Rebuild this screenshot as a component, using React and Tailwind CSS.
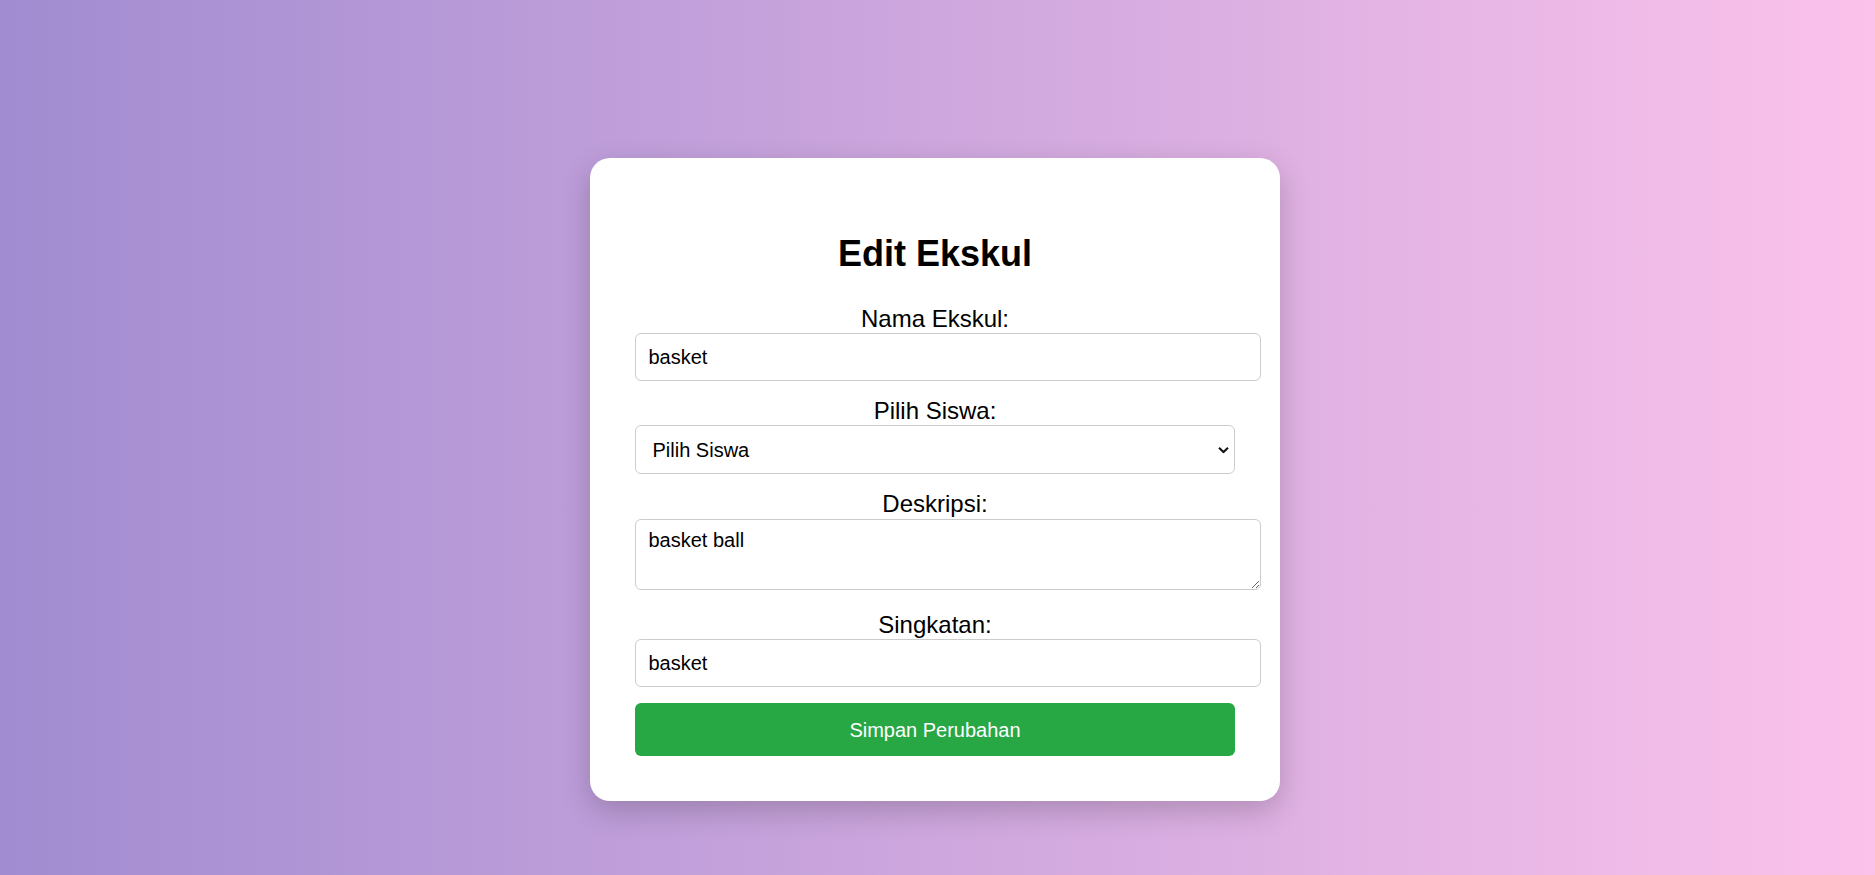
import React from 'react';

const FIELD_CLASS =
  'block w-[626px] px-[12.5px] border border-[#cccccc] rounded-[6px] bg-white text-[20px] text-black outline-none';

const FieldLabel = ({ htmlFor, children }) => (
  <label htmlFor={htmlFor} className="block text-center text-[24px] leading-[27.6px] text-black">
    {children}
  </label>
);

const Chevron = () => (
  <svg
    className="absolute right-[6px] top-1/2 -translate-y-1/2 pointer-events-none"
    width="11"
    height="7"
    viewBox="0 0 11 7"
    fill="none"
  >
    <path d="M1 1.2L5.5 5.5L10 1.2" stroke="#111111" strokeWidth="2" />
  </svg>
);

const EditEkskul = () => {
  return (
    <div
      className="min-h-screen w-full flex justify-center items-start pt-[158px] pr-[5px] bg-[linear-gradient(to_right,#a18cd1,#fbc2eb)]"
      style={{ fontFamily: '"Liberation Sans", Arial, sans-serif' }}
    >
      <div className="w-[690px] bg-white rounded-[20px] p-[45px] shadow-[0_10px_30px_rgba(0,0,0,0.2)]">
        <h2 className="mt-[30px] mb-[30.5px] text-center text-[36px] leading-[41px] font-bold text-black">
          Edit Ekskul
        </h2>

        <form className="flex flex-col">
          <FieldLabel htmlFor="nama">Nama Ekskul:</FieldLabel>
          <input id="nama" type="text" defaultValue="basket" className={`${FIELD_CLASS} h-[48px] mt-[1.2px]`} />

          <div className="mt-[15.4px]">
            <FieldLabel htmlFor="siswa">Pilih Siswa:</FieldLabel>
          </div>
          <div className="relative w-[600px] mt-[1.2px]">
            <select
              id="siswa"
              defaultValue=""
              className="block appearance-none w-full h-[49px] pl-[16.5px] pr-[30px] border border-[#cccccc] rounded-[6px] bg-white text-[20px] text-black outline-none"
            >
              <option value="">Pilih Siswa</option>
            </select>
            <Chevron />
          </div>

          <div className="mt-[15.4px]">
            <FieldLabel htmlFor="deskripsi">Deskripsi:</FieldLabel>
          </div>
          <textarea
            id="deskripsi"
            defaultValue="basket ball"
            className={`${FIELD_CLASS} h-[71px] mt-[1.2px] py-[9px] leading-[23px]`}
          />

          <div className="mt-[21px]">
            <FieldLabel htmlFor="singkatan">Singkatan:</FieldLabel>
          </div>
          <input id="singkatan" type="text" defaultValue="basket" className={`${FIELD_CLASS} h-[48px] mt-[1.2px]`} />

          <button
            type="button"
            className="mt-[15.7px] w-[600px] h-[53px] rounded-[6px] bg-[#28a745] text-white text-[20px]"
          >
            Simpan Perubahan
          </button>
        </form>
      </div>
    </div>
  );
};

export default EditEkskul;
